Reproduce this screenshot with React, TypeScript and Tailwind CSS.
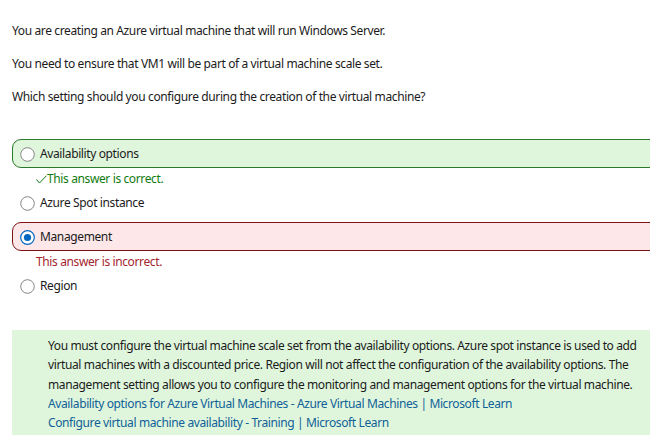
import React from "react";

const font = { fontFamily: '"Segoe UI", "Noto Sans", "Open Sans", sans-serif', letterSpacing: "-0.38px" };

function Radio({ selected }: { selected?: boolean }) {
  return (
    <svg width="15" height="15" viewBox="0 0 15 15" className="shrink-0">
      {selected ? (
        <>
          <circle cx="7.5" cy="7.5" r="6.8" fill="#ffffff" stroke="#0067c0" strokeWidth="1.2" />
          <circle cx="7.5" cy="7.5" r="3.6" fill="#0067c0" />
        </>
      ) : (
        <circle cx="7.5" cy="7.5" r="6.8" fill="#ffffff" stroke="#858585" strokeWidth="1" />
      )}
    </svg>
  );
}

export default function App() {
  return (
    <div
      className="w-[650px] h-[435px] overflow-hidden bg-white text-[12px] text-[#1b1b1b]"
      style={font}
    >
      <div className="pl-[12px] pt-[23px]">
        <p className="leading-[16px]">You are creating an Azure virtual machine that will run Windows Server.</p>
        <p className="leading-[16px] mt-[17px]">You need to ensure that VM1 will be part of a virtual machine scale set.</p>
        <p className="leading-[16px] mt-[17px]">Which setting should you configure during the creation of the virtual machine?</p>

        <div className="mt-[34px] flex flex-col">
          <div className="h-[29px] mr-[-30px] flex items-center gap-[5px] pl-[7px] pt-[1px] border border-[#2b7a2b] bg-[#dff6dd] rounded-l-[9px]">
            <Radio />
            <span>Availability options</span>
          </div>
          <div className="mt-[3px] h-[16px] leading-[16px] pl-[24px] text-[#107c10] flex items-center">
            <svg width="11" height="9" viewBox="0 0 11 9" className="shrink-0 mt-[1px]">
              <polyline points="0.5,4.5 3.5,8 10.5,0.7" fill="none" stroke="#107c10" strokeWidth="1" />
            </svg>
            <span>This answer is correct.</span>
          </div>
          <div className="mt-[2px] h-[28px] flex items-center gap-[5px] pl-[8px]">
            <Radio />
            <span>Azure Spot instance</span>
          </div>
          <div className="mt-[5px] h-[29px] mr-[-30px] flex items-center gap-[5px] pl-[7px] pt-[1px] border border-[#7d1414] bg-[#fde7e9] rounded-l-[9px]">
            <Radio selected />
            <span>Management</span>
          </div>
          <div className="mt-[3px] h-[16px] leading-[16px] pl-[24px] text-[#a4262c]">This answer is incorrect.</div>
          <div className="mt-[2px] h-[28px] flex items-center gap-[5px] pl-[8px]">
            <Radio />
            <span>Region</span>
          </div>
        </div>

        <div className="mt-[30px] mr-[-30px] bg-[#dff6dd] pl-[36px] pt-[6px] pb-[10px] leading-[19.3px] whitespace-nowrap">
          <div>You must configure the virtual machine scale set from the availability options. Azure spot instance is used to add</div>
          <div>virtual machines with a discounted price. Region will not affect the configuration of the availability options. The</div>
          <div>management setting allows you to configure the monitoring and management options for the virtual machine.</div>
          <div>
            <a className="text-[#0f6196]" href="#">Availability options for Azure Virtual Machines - Azure Virtual Machines | Microsoft Learn</a>
          </div>
          <div>
            <a className="text-[#0f6196]" href="#">Configure virtual machine availability - Training | Microsoft Learn</a>
          </div>
        </div>
      </div>
    </div>
  );
}
